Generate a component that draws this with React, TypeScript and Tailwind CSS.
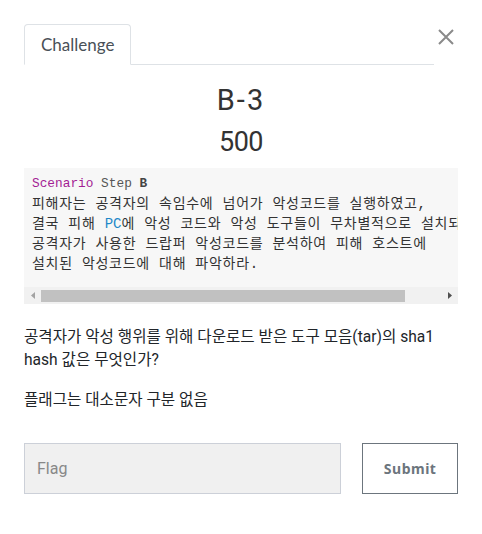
import React from "react";

const kr = '"Noto Sans CJK KR"';

export default function App() {
  return (
    <div
      className="w-[482px] h-[534px] bg-white p-6 text-[#212529]"
      style={{ fontFamily: `Roboto, ${kr}, sans-serif` }}
    >
      {/* header tabs */}
      <div className="flex items-start">
        <div className="flex-1 flex border-b border-[#dee2e6]">
          <div
            className="h-[41px] -mb-px px-4 flex items-center border border-[#dee2e6] border-b-white rounded-t-[4px] bg-white text-[17px] text-[#495057]"
            style={{ fontFamily: `Lato, ${kr}, sans-serif` }}
          >
            Challenge
          </div>
        </div>
        <button className="w-6 h-[32px] flex items-start justify-center pt-[5px] text-[#888]">
          <svg width="16" height="16" viewBox="0 0 16 16" fill="none" stroke="#8a8a8a" strokeWidth="2">
            <path d="M1 1 L15 15 M15 1 L1 15" />
          </svg>
        </button>
      </div>

      {/* title */}
      <div className="flex flex-col items-center mt-[17px] text-[#333]" style={{ fontFamily: `Roboto, ${kr}, sans-serif` }}>
        <div className="text-[29px] leading-[36px] tracking-[2px] font-normal">B-3</div>
        <div className="text-[27px] leading-[36px] mt-[6px] tracking-[-0.5px] font-normal">500</div>
      </div>

      {/* code block */}
      <div className="mt-[8px] bg-[#f7f7f7]">
        <div
          className="overflow-hidden whitespace-pre pl-2 pt-[6px] pb-[13px] text-[14px] leading-[20px] text-[#333] tracking-[0.72px]"
          style={{ fontFamily: `"Liberation Mono", ${kr}, monospace` }}
        >
          <div className="text-[12.8px] tracking-normal">
            <span className="text-[#a31c94]">Scenario</span>
            <span className="text-[#555]"> Step </span>
            <span className="font-bold text-[#444]">B</span>
          </div>
          <div>피해자는 공격자의 속임수에 넘어가 악성코드를 실행하였고,</div>
          <div>
            결국 피해 <span className="text-[#1e88c8] tracking-normal">PC</span>에 악성 코드와 악성 도구들이 무차별적으로 설치되었다.
          </div>
          <div>공격자가 사용한 드랍퍼 악성코드를 분석하여 피해 호스트에</div>
          <div>설치된 악성코드에 대해 파악하라.</div>
        </div>
        <div className="h-[17px] bg-[#f1f1f1] flex items-center">
          <div className="w-[17px] flex justify-center">
            <svg width="4" height="7" viewBox="0 0 4 7">
              <path d="M4 0 L0 3.5 L4 7 Z" fill="#a3a3a3" />
            </svg>
          </div>
          <div className="w-[364px] h-[12px] bg-[#c1c1c1]" />
          <div className="flex-1 flex justify-end pr-[6px]">
            <svg width="4" height="7" viewBox="0 0 4 7">
              <path d="M0 0 L4 3.5 L0 7 Z" fill="#505050" />
            </svg>
          </div>
        </div>
      </div>

      {/* question */}
      <div className="mt-[22px] text-[15.6px] leading-[23px] text-[#212529]">
        <p className="mb-[17px]">공격자가 악성 행위를 위해 다운로드 받은 도구 모음(tar)의 sha1 hash 값은 무엇인가?</p>
        <p>플래그는 대소문자 구분 없음</p>
      </div>

      {/* form */}
      <div className="mt-[31px] flex gap-[21px]">
        <input
          placeholder="Flag"
          className="w-[318px] h-[51px] bg-[#f0f0f0] border border-[#ccd0d8] px-3 text-[16px] text-[#333] placeholder:text-[#888] outline-none"
          style={{ fontFamily: `Roboto, ${kr}, sans-serif` }}
        />
        <button
          className="w-[96px] h-[51px] border border-[#6c757d] bg-white text-[14px] font-bold tracking-[0.5px] text-[#6c757d]"
          style={{ fontFamily: `"Noto Sans", ${kr}, sans-serif` }}
        >
          Submit
        </button>
      </div>
    </div>
  );
}
